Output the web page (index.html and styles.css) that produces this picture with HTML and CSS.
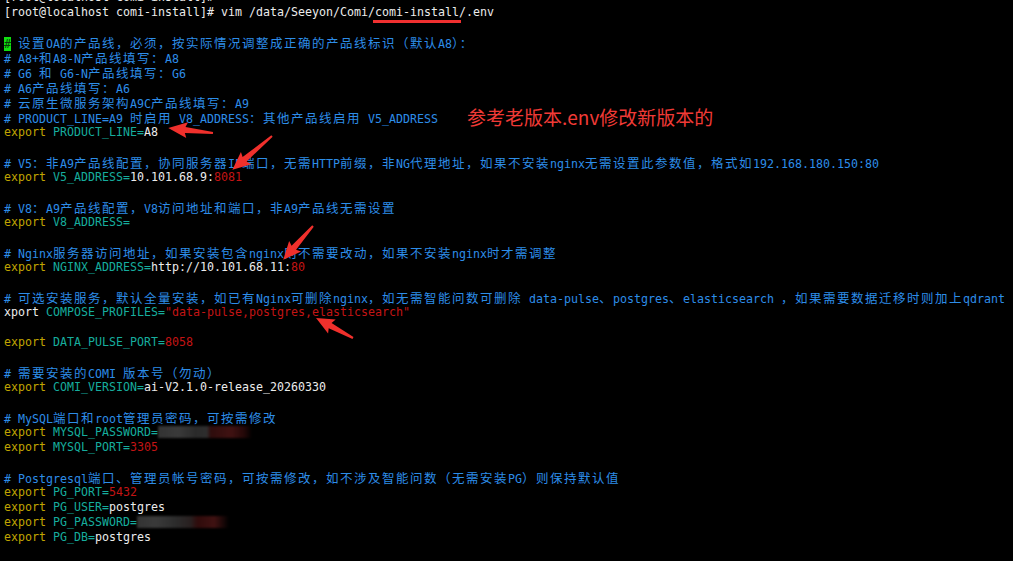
FILE: index.html
```html
<!DOCTYPE html>
<html lang="zh-CN">
<head>
<meta charset="utf-8">
<title>vim .env</title>
<link rel="stylesheet" href="styles.css">
</head>
<body>
<div class="screen">
  <div class="term">
    <div class="ln w">[root@localhost comi-install]# </div>
    <div class="ln w">[root@localhost comi-install]# vim /data/Seeyon/Comi/comi-install/.env</div>
    <div class="ln"></div>
    <div class="ln c"><span class="cur">#</span> <span class="z">设置</span>OA<span class="z">的产品线，必须，按实际情况调整成正确的产品线标识（默认</span>A8<span class="z">）：</span></div>
    <div class="ln c"># A8+<span class="z">和</span>A8-N<span class="z">产品线填写：</span>A8</div>
    <div class="ln c"># G6 <span class="z">和</span> G6-N<span class="z">产品线填写：</span>G6</div>
    <div class="ln c"># A6<span class="z">产品线填写：</span>A6</div>
    <div class="ln c"># <span class="z">云原生微服务架构</span>A9C<span class="z">产品线填写：</span>A9</div>
    <div class="ln c"># PRODUCT_LINE=A9 <span class="z">时启用</span> V8_ADDRESS<span class="z">：其他产品线启用</span> V5_ADDRESS</div>
    <div class="ln"><span class="k">export</span> <span class="v">PRODUCT_LINE=</span><span class="w">A8</span></div>
    <div class="ln"></div>
    <div class="ln c"># V5<span class="z">：非</span>A9<span class="z">产品线配置，协同服务器</span>IP<span class="z">端口，无需</span>HTTP<span class="z">前缀，非</span>NG<span class="z">代理地址，如果不安装</span>nginx<span class="z">无需设置此参数值，格式如</span>192.168.180.150:80</div>
    <div class="ln"><span class="k">export</span> <span class="v">V5_ADDRESS=</span><span class="w">10.101.68.9:</span><span class="n">8081</span></div>
    <div class="ln"></div>
    <div class="ln c"># V8<span class="z">：</span>A9<span class="z">产品线配置，</span>V8<span class="z">访问地址和端口，非</span>A9<span class="z">产品线无需设置</span></div>
    <div class="ln"><span class="k">export</span> <span class="v">V8_ADDRESS=</span></div>
    <div class="ln"></div>
    <div class="ln c"># Nginx<span class="z">服务器访问地址，如果安装包含</span>nginx<span class="z">则不需要改动，如果不安装</span>nginx<span class="z">时才需调整</span></div>
    <div class="ln"><span class="k">export</span> <span class="v">NGINX_ADDRESS=</span><span class="w">http://10.101.68.11:</span><span class="n">80</span></div>
    <div class="ln"></div>
    <div class="ln c"># <span class="z">可选安装服务，默认全量安装，如已有</span>Nginx<span class="z">可删除</span>nginx<span class="z">，如无需智能问数可删除</span> data-pulse<span class="z">、</span>postgres<span class="z">、</span>elasticsearch <span class="z">，如果需要数据迁移时则加上</span>qdrant</div>
    <div class="ln"><span class="w">xport</span> <span class="v">COMPOSE_PROFILES=</span><span class="n">"data-pulse,postgres,elasticsearch"</span></div>
    <div class="ln"></div>
    <div class="ln"><span class="k">export</span> <span class="v">DATA_PULSE_PORT=</span><span class="n">8058</span></div>
    <div class="ln"></div>
    <div class="ln c"># <span class="z">需要安装的</span>COMI <span class="z">版本号（勿动）</span></div>
    <div class="ln"><span class="k">export</span> <span class="v">COMI_VERSION=</span><span class="w">ai-V2.1.0-release_20260330</span></div>
    <div class="ln"></div>
    <div class="ln c"># MySQL<span class="z">端口和</span>root<span class="z">管理员密码，可按需修改</span></div>
    <div class="ln"><span class="k">export</span> <span class="v">MYSQL_PASSWORD=</span><span class="mosaic m1"></span></div>
    <div class="ln"><span class="k">export</span> <span class="v">MYSQL_PORT=</span><span class="n">3305</span></div>
    <div class="ln"></div>
    <div class="ln c"># Postgresql<span class="z">端口、管理员帐号密码，可按需修改，如不涉及智能问数（无需安装</span>PG<span class="z">）则保持默认值</span></div>
    <div class="ln"><span class="k">export</span> <span class="v">PG_PORT=</span><span class="n">5432</span></div>
    <div class="ln"><span class="k">export</span> <span class="v">PG_USER=</span><span class="w">postgres</span></div>
    <div class="ln"><span class="k">export</span> <span class="v">PG_PASSWORD=</span><span class="mosaic m2"></span></div>
    <div class="ln"><span class="k">export</span> <span class="v">PG_DB=</span><span class="w">postgres</span></div>
  </div>

  <div class="underline"></div>
  <div class="note">参考老版本.env修改新版本的</div>

  <svg class="marks" width="1013" height="561" viewBox="0 0 1013 561">
    <g fill="#f0302c">
      <polygon transform="translate(213,133) rotate(186.3)" points="0,-1 28,-3 26,-8 45,0 26,8 28,3 0,1"/>
      <polygon transform="translate(272,136) rotate(139.6)" points="0,-1 36,-3 34,-8 52,0 34,8 36,3 0,1"/>
      <polygon transform="translate(313,226) rotate(131.4)" points="0,-1 29,-3 27,-8 45,0 27,8 29,3 0,1"/>
      <polygon transform="translate(353,338) rotate(208.4)" points="0,-1 26,-3 24,-8 42,0 24,8 26,3 0,1"/>
    </g>
  </svg>
</div>
</body>
</html>
```

FILE: styles.css
```css
html, body {
  margin: 0;
  padding: 0;
  background: #000;
}

.screen {
  position: relative;
  width: 1013px;
  height: 561px;
  overflow: hidden;
  background: #000;
}

.term {
  margin-top: -10px;
  padding: 0 4px;
  font-family: "DejaVu Sans Mono", "Liberation Mono", monospace;
  font-size: 11.63px;
  color: #e6e6e6;
}

.ln {
  height: 15px;
  line-height: 15px;
  white-space: pre;
}

.z {
  font-family: "Noto Sans CJK SC", "Noto Sans", sans-serif;
  font-size: 12.5px;
  letter-spacing: 1.5px;
  line-height: 15px;
}

.c { color: #2d8de8; }
.k { color: #c0a400; }
.v { color: #16ad9d; }
.n { color: #c41414; }
.w { color: #ececec; }

.cur {
  background: #10e010;
  color: #0a3a0a;
}

.mosaic {
  display: inline-block;
  height: 12px;
  vertical-align: -2px;
  filter: blur(1.2px);
}

.m1 {
  width: 94px;
  background: linear-gradient(to right, #333 0, #3a3a3a 22%, #2a2a2a 40%, #2e2e2e 52%, #2e0c0c 56%, #401212 78%, #220707 92%, rgba(0,0,0,0) 100%);
}

.m2 {
  width: 92px;
  background: linear-gradient(to right, #333 0, #3a3a3a 20%, #2c2c2c 42%, #282020 58%, #300b0b 66%, #401212 84%, rgba(0,0,0,0) 100%);
}

.underline {
  position: absolute;
  left: 373px;
  top: 20px;
  width: 88px;
  height: 3px;
  background: #f03030;
}

.note {
  position: absolute;
  left: 467px;
  top: 104px;
  font-family: "Noto Sans CJK SC", "Noto Sans", sans-serif;
  font-size: 19px;
  line-height: 26px;
  color: #f03a36;
  white-space: nowrap;
}

.marks {
  position: absolute;
  left: 0;
  top: 0;
}
```
